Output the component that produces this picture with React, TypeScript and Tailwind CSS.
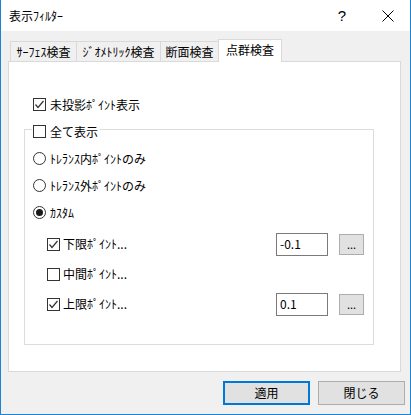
import React from "react";

const font = "font-['Noto_Sans_CJK_JP','Noto_Sans',sans-serif]";

function CheckBox({ checked }: { checked: boolean }) {
  return (
    <div className="w-[13px] h-[13px] border border-[#333333] bg-white flex items-center justify-center shrink-0">
      {checked && (
        <svg width="11" height="11" viewBox="0 0 11 11">
          <polyline points="1.5,5.5 4,8.5 9.5,2" fill="none" stroke="#333333" strokeWidth="1.2" />
        </svg>
      )}
    </div>
  );
}

function Radio({ checked }: { checked: boolean }) {
  return (
    <div className="w-[13px] h-[13px] rounded-full border border-[#333333] bg-white flex items-center justify-center shrink-0">
      {checked && <div className="w-[7px] h-[7px] rounded-full bg-[#1a1a1a]" />}
    </div>
  );
}

function SubRow({ label, checked, value }: { label: string; checked: boolean; value?: string }) {
  return (
    <div className="h-[30px] flex items-center pl-[22px] pr-[9px]">
      <CheckBox checked={checked} />
      <span className="ml-[3px] flex-1 leading-none">{label}</span>
      {value !== undefined && (
        <>
          <div className="w-[52px] h-[23px] border border-[#7a7a7a] bg-white flex items-center pl-[3px] leading-none">
            {value}
          </div>
          <div className="ml-[11px] w-[25px] h-[21px] border border-[#adadad] bg-[#e1e1e1] flex items-center justify-center leading-none text-[11px]">
            ...
          </div>
        </>
      )}
    </div>
  );
}

export default function App() {
  return (
    <div className={`w-[411px] h-[415px] bg-[#f0f0f0] border-x border-b border-[#1883d7] flex flex-col text-[12px] text-black ${font}`}>
      <div className="h-[31px] bg-white flex items-center pl-[8px] pr-[16px] shrink-0">
        <span className="flex-1 leading-none">表示ﾌｨﾙﾀｰ</span>
        <span className="text-[15px] leading-none mr-[36px] font-['Liberation_Sans',sans-serif]">?</span>
        <svg width="12" height="12" viewBox="0 0 12 12" className="mr-[0px]">
          <line x1="0.5" y1="0.5" x2="11.5" y2="11.5" stroke="#000" strokeWidth="1" />
          <line x1="11.5" y1="0.5" x2="0.5" y2="11.5" stroke="#000" strokeWidth="1" />
        </svg>
      </div>
      <div className="ml-[7px] mt-[8px] w-[393px] flex flex-col">
        <div className="h-[22px] flex items-end pl-[2px]">
          <div className="w-[66px] h-[20px] border-l border-t border-[#d9d9d9] flex items-center justify-center leading-none">ｻｰﾌｪｽ検査</div>
          <div className="w-[84px] h-[20px] border-l border-t border-[#d9d9d9] flex items-center justify-center leading-none">ｼﾞｵﾒﾄﾘｯｸ検査</div>
          <div className="w-[58px] h-[20px] border-l border-t border-[#d9d9d9] flex items-center justify-center leading-none">断面検査</div>
          <div className="relative z-10 w-[64px] h-[23px] -mb-px bg-white border-l border-t border-r border-[#d9d9d9] flex items-center justify-center leading-none pb-[2px]">点群検査</div>
        </div>
        <div className="h-[311px] bg-white border border-[#d9d9d9] flex flex-col">
          <div className="mt-[36px] pl-[24px] h-[13px] flex items-center">
            <CheckBox checked={true} />
            <span className="ml-[4px] leading-none">未投影ﾎﾟｲﾝﾄ表示</span>
          </div>
          <div className="relative ml-[15px] mt-[18px] w-[350px] h-[216px] border border-[#dcdcdc]">
            <div className="absolute left-[7px] top-[-5px] bg-white pr-[2px] pl-[1px] h-[13px] flex items-center">
              <CheckBox checked={false} />
              <span className="ml-[4px] leading-none">全て表示</span>
            </div>
            <div className="mt-[15px] flex flex-col">
              {[
                ["ﾄﾚﾗﾝｽ内ﾎﾟｲﾝﾄのみ", false],
                ["ﾄﾚﾗﾝｽ外ﾎﾟｲﾝﾄのみ", false],
                ["ｶｽﾀﾑ", true],
              ].map(([label, checked]) => (
                <div key={label as string} className="h-[27px] flex items-center pl-[8px]">
                  <Radio checked={checked as boolean} />
                  <span className="ml-[4px] leading-none">{label as string}</span>
                </div>
              ))}
            </div>
            <div className="mt-[3px] flex flex-col">
              <SubRow label="下限ﾎﾟｲﾝﾄ..." checked={true} value="-0.1" />
              <SubRow label="中間ﾎﾟｲﾝﾄ..." checked={false} />
              <SubRow label="上限ﾎﾟｲﾝﾄ..." checked={true} value="0.1" />
            </div>
          </div>
        </div>
      </div>
      <div className="flex justify-end gap-[8px] mt-[9px] pr-[5px]">
        <div className="w-[87px] h-[24px] border-2 border-[#0078d7] bg-[#e1e1e1] flex items-center justify-center leading-none">適用</div>
        <div className="w-[87px] h-[24px] border border-[#adadad] bg-[#e1e1e1] flex items-center justify-center leading-none">閉じる</div>
      </div>
    </div>
  );
}
